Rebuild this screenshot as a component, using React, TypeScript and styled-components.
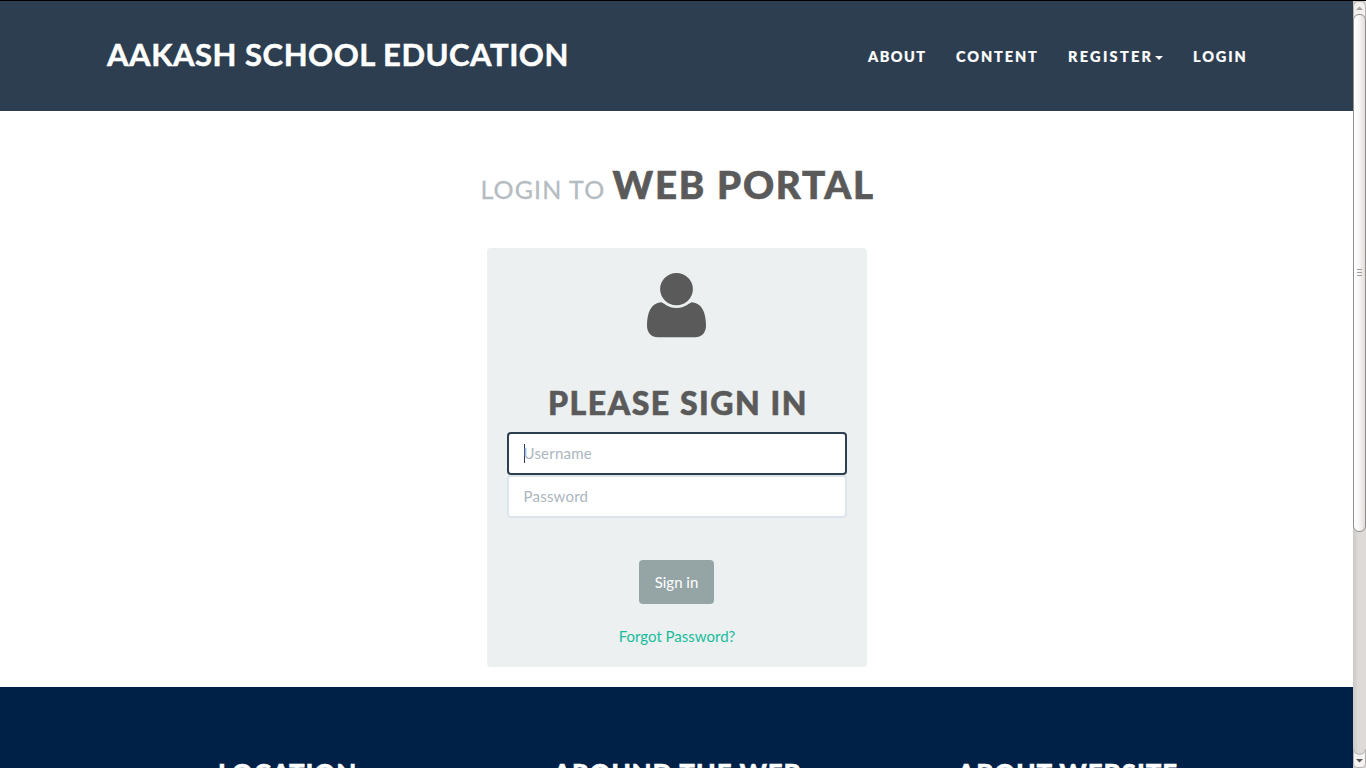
import React from "react";
import styled, { createGlobalStyle } from "styled-components";

const GlobalStyle = createGlobalStyle`
  * { box-sizing: border-box; }
  html, body { margin: 0; height: 100%; overflow: hidden; }
  body { font-family: Lato, "Liberation Sans", sans-serif; font-size: 15px; line-height: 21px; color: #5a5a5a; background: #fff; }
`;

const Window = styled.div`
  display: flex;
  width: 1366px;
  height: 768px;
  overflow: hidden;
  border-top: 1px solid #000;
`;

const Page = styled.div`
  width: 1353px;
  height: 767px;
  overflow: hidden;
  display: flex;
  flex-direction: column;
`;

const Header = styled.header`
  height: 110px;
  flex: none;
  background: #2c3e50;
  padding: 0 106px 0 107px;
  display: flex;
  justify-content: space-between;
`;

const heading = `
  font-family: Lato, "Liberation Sans", sans-serif;
  text-transform: uppercase;
  white-space: nowrap;
  margin: 0;
`;

const Brand = styled.a`
  ${heading}
  color: #fff;
  font-size: 31px;
  line-height: 40px;
  font-weight: 700;
  letter-spacing: 0.54px;
  -webkit-text-stroke: 0.5px currentColor;
  padding-top: 33px;
`;

const Nav = styled.nav`
  display: flex;
  gap: 30px;
  padding-top: 45px;
`;

const NavLink = styled.a<{ $width: number; $spacing: number }>`
  ${heading}
  display: flex;
  align-items: center;
  height: 20px;
  width: ${(p) => p.$width}px;
  color: #fff;
  font-size: 14.5px;
  font-weight: 900;
  letter-spacing: ${(p) => p.$spacing}px;
  -webkit-text-stroke: 0.2px currentColor;
`;

const Caret = styled.span`
  border: 4px solid transparent;
  border-top-color: #fff;
  border-bottom: 0;
  margin: 3px 0 0 2px;
`;

const Main = styled.main`
  height: 576px;
  flex: none;
  display: flex;
  flex-direction: column;
  align-items: center;
`;

const Title = styled.h1`
  ${heading}
  display: flex;
  align-items: baseline;
  width: 392px;
  height: 137px;
  padding-top: 50px;
  font-size: 38.5px;
  line-height: 46px;
  font-weight: 900;
  letter-spacing: 1.75px;
  -webkit-text-stroke: 0.6px currentColor;
`;

const Light = styled.small`
  width: 132px;
  flex: none;
  font-size: 25px;
  font-weight: 400;
  letter-spacing: 1.1px;
  -webkit-text-stroke: 0.3px currentColor;
  color: #b4bcc2;
`;

const Card = styled.form`
  width: 380px;
  height: 419px;
  padding: 25px 20px 0;
  border-radius: 4px;
  background: #ecf0f1;
  display: flex;
  flex-direction: column;
  align-items: center;
`;

const SignInHeading = styled.h2`
  ${heading}
  margin-top: 45px;
  height: 49px;
  line-height: 40px;
  font-size: 32px;
  font-weight: 900;
  letter-spacing: 1.55px;
  -webkit-text-stroke: 0.6px currentColor;
  padding-left: 3px;
`;

const Field = styled.label<{ $focused?: boolean }>`
  width: 340px;
  height: 43px;
  flex: none;
  display: flex;
  align-items: center;
  padding: 0 15px;
  border: 2px solid ${(p) => (p.$focused ? "#2c3e50" : "#dce4ec")};
  border-radius: 4px;
  background: #fff;
  color: #acb6c0;
  letter-spacing: 0.22px;
`;

const TextCursor = styled.span`
  width: 1px;
  height: 19px;
  margin-right: -1px;
  background: #2c3e50;
`;

const Button = styled.button`
  width: 75px;
  height: 44px;
  margin-top: 42px;
  padding: 0;
  border: 0;
  border-radius: 4px;
  background: #95a5a6;
  color: #fff;
  font: inherit;
`;

const Forgot = styled.a`
  margin-top: 22px;
  padding-left: 1px;
  color: #18bc9c;
`;

const Footer = styled.footer`
  flex: 1;
  background: #002147;
  padding: 69px 110px 0;
  display: grid;
  grid-template-columns: 355px 425px 1fr;
  overflow: hidden;
`;

const FooterTitle = styled.h3<{ $spacing: number; $indent: number }>`
  ${heading}
  color: #fff;
  font-size: 26px;
  line-height: 34px;
  font-weight: 900;
  padding-left: ${(p) => p.$indent}px;
  letter-spacing: ${(p) => p.$spacing}px;
  -webkit-text-stroke: 0.4px currentColor;
`;

const UserIcon = () => (
  <svg width="60" height="65" viewBox="0 0 60 65" fill="#5a5a5a">
    <ellipse cx="29.5" cy="16.1" rx="16.4" ry="16.1" />
    <path d="M14 29.2C4 29.8 0 40 0 52.5C0 60 4.5 64.2 11 64.2H48C54.500 64.200 59 60 59 52.500C59 40 55 29.800 45 29.200C43 29.200 38 35 29.500 35C21 35 16 29.200 14 29.200Z" />
  </svg>
);

const Scrollbar = () => (
  <svg width="13" height="767" viewBox="0 1 13 767">
    <defs>
      <linearGradient id="track">
        <stop offset="0" stopColor="#cbc7c4" />
        <stop offset="0.4" stopColor="#dedad8" />
        <stop offset="1" stopColor="#dedad7" />
      </linearGradient>
      <linearGradient id="thumb">
        <stop offset="0" stopColor="#fff" />
        <stop offset="0.45" stopColor="#f8f7f7" />
        <stop offset="1" stopColor="#dedad8" />
      </linearGradient>
    </defs>
    <rect width="13" height="768" fill="url(#track)" />
    <rect x="0.5" y="1.500" width="12" height="20" rx="5" fill="#f3f1f0" stroke="#b5b1ae" />
    <path d="M3 10L6.500 6.500L10 10Z" fill="#a5a29f" />
    <rect x="0.5" y="14.500" width="12" height="517" rx="5.500" fill="url(#thumb)" stroke="#918e8c" />
    <path d="M4 269.500H9M4 272.500H9M4 275.500H9" stroke="#a09e9d" />
    <path d="M0.500 749C0.500 756 12.500 756 12.500 749V763Q12.500 767.500 8 767.500H5Q0.500 767.500 0.500 763Z" fill="#f5f3f2" stroke="#b5b1ae" />
    <path d="M3 759L6.500 762.500L10 759Z" fill="#555" />
  </svg>
);

export default function App() {
  return (
    <>
      <GlobalStyle />
      <Window>
        <Page>
          <Header>
            <Brand>Aakash School Education</Brand>
            <Nav>
              <NavLink $width={58} $spacing={1.5}>About</NavLink>
              <NavLink $width={82} $spacing={1.9}>Content</NavLink>
              <NavLink $width={95} $spacing={2.3}>Register<Caret /></NavLink>
              <NavLink $width={54} $spacing={1.9}>Login</NavLink>
            </Nav>
          </Header>
          <Main>
            <Title><Light>Login to</Light>Web Portal</Title>
            <Card>
              <UserIcon />
              <SignInHeading>Please sign in</SignInHeading>
              <Field $focused><TextCursor />Username</Field>
              <Field>Password</Field>
              <Button type="button">Sign in</Button>
              <Forgot>Forgot Password?</Forgot>
            </Card>
          </Main>
          <Footer>
            <FooterTitle $indent={108} $spacing={0.85}>Location</FooterTitle>
            <FooterTitle $indent={88} $spacing={0.82}>Around the Web</FooterTitle>
            <FooterTitle $indent={67} $spacing={0.9}>About Website</FooterTitle>
          </Footer>
        </Page>
        <Scrollbar />
      </Window>
    </>
  );
}
